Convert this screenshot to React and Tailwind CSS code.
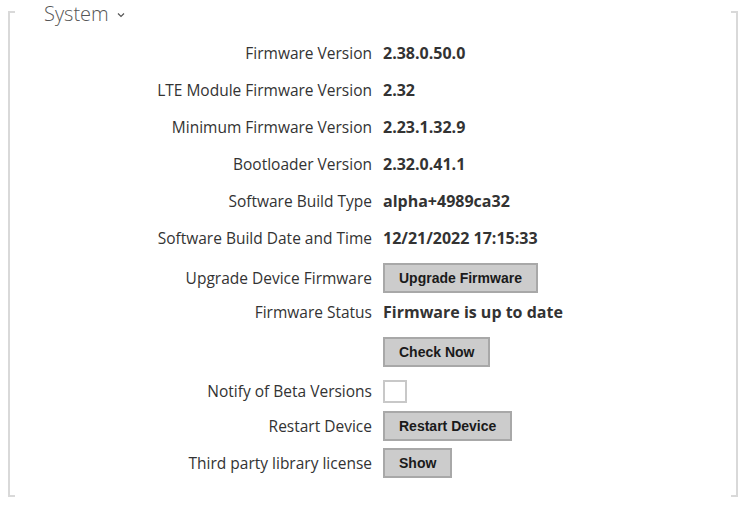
import React from "react";

const rows = [
  { label: "Firmware Version", value: "2.38.0.50.0", cls: "mt-[31px] h-[22px]" },
  { label: "LTE Module Firmware Version", value: "2.32", cls: "mt-[15px] h-[22px]" },
  { label: "Minimum Firmware Version", value: "2.23.1.32.9", cls: "mt-[15px] h-[22px]" },
  { label: "Bootloader Version", value: "2.32.0.41.1", cls: "mt-[15px] h-[22px]" },
  { label: "Software Build Type", value: "alpha+4989ca32", cls: "mt-[15px] h-[22px]" },
  { label: "Software Build Date and Time", value: "12/21/2022 17:15:33", cls: "mt-[15px] h-[22px]" },
  { label: "Upgrade Device Firmware", button: "Upgrade Firmware", cls: "mt-[14px] h-[30px]" },
  { label: "Firmware Status", value: "Firmware is up to date", cls: "mt-[8px] h-[22px]" },
  { label: "", button: "Check Now", cls: "mt-[14px] h-[30px]" },
  { label: "Notify of Beta Versions", checkbox: true, cls: "mt-[12px] h-[24px]" },
  { label: "Restart Device", button: "Restart Device", cls: "mt-[8px] h-[30px]" },
  { label: "Third party library license", button: "Show", cls: "mt-[7px] h-[30px]" },
];

function Corner({ pos }) {
  return <span className={`absolute h-[2px] w-[7px] bg-[#d9d9d9] ${pos}`} />;
}

export default function App() {
  return (
    <div className="min-h-[517px] bg-white pt-[11px] pl-[8px] pr-[14px] font-['Open_Sans',sans-serif] text-[#333]">
      <div className="relative border-x-2 border-[#d9d9d9] pb-[19px]">
        <Corner pos="-left-[2px] top-0" />
        <Corner pos="-right-[2px] top-0" />
        <Corner pos="-left-[2px] bottom-0" />
        <Corner pos="-right-[2px] bottom-0" />

        {/* Section title */}
        <div className="absolute -top-[10px] left-[34px] flex items-center gap-[8px] bg-white pr-[4px]">
          <span className="text-[20px] leading-[26px] font-light text-[#555]">System</span>
          <svg width="8" height="6" viewBox="0 0 8 6" className="mt-[2px]">
            <path d="M1 1.5 L4 4.5 L7 1.5" fill="none" stroke="#555" strokeWidth="1.2" />
          </svg>
        </div>

        <div className="flex flex-col">
          {rows.map((r, i) => (
            <div key={i} className={`flex items-center ${r.cls}`}>
              <div className="w-[373px] shrink-0 pr-[11px] text-right text-[15.5px] leading-[22px] whitespace-nowrap">
                {r.label}
              </div>
              {r.value && (
                <div className="text-[16px] leading-[22px] font-bold whitespace-nowrap">{r.value}</div>
              )}
              {r.button && (
                <button className="h-[30px] border-2 border-[#a8a8a8] bg-[#cccccc] px-[14px] font-['Liberation_Sans',Arial,sans-serif] text-[14px] font-bold text-[#1a1a1a]">
                  {r.button}
                </button>
              )}
              {r.checkbox && (
                <span className="block h-[23px] w-[24px] border-2 border-[#c8c8c8] bg-white" />
              )}
            </div>
          ))}
        </div>
      </div>
    </div>
  );
}
